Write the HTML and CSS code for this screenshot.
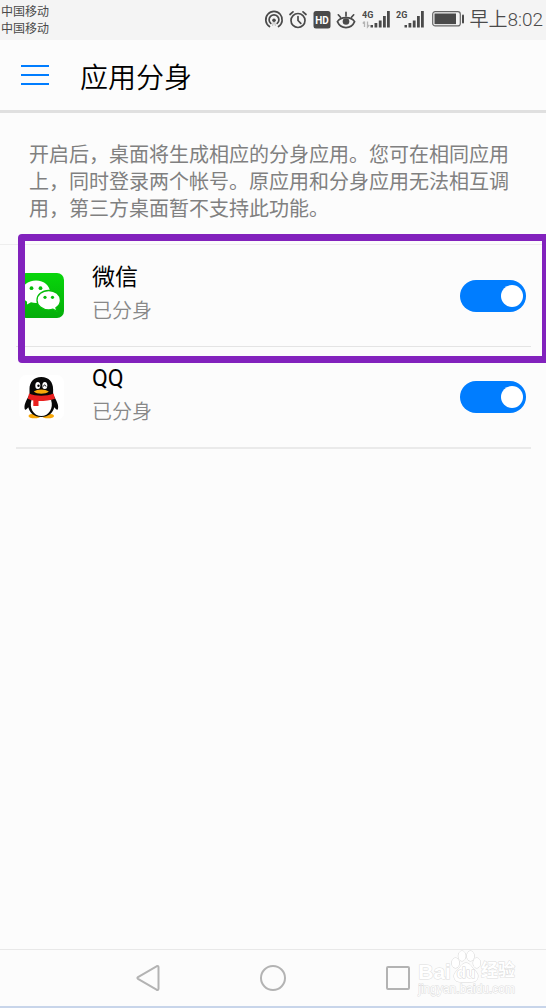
FILE: index.html
```
<!DOCTYPE html>
<html lang="zh-CN">
<head>
<meta charset="utf-8">
<meta name="viewport" content="width=device-width, initial-scale=1">
<title>应用分身</title>
<link rel="stylesheet" href="styles.css">
</head>
<body>
<div class="screen">
  <div class="status">
    <div class="carriers"><span>中国移动</span><span>中国移动</span></div>
    <div class="indicators">
      <svg width="20" height="20" viewBox="0 0 20 20" fill="none" stroke="#4a4a4a" stroke-width="1.7" stroke-linecap="round">
        <path d="M5.500 16.500A8.200 8.200 0 1 1 14.500 16.500"/><path d="M6.800 13.400A4.900 4.900 0 1 1 13.200 13.400"/>
        <circle cx="10" cy="10.300" r="1.800" fill="#4a4a4a" stroke="none"/><path d="M9.500 11L8.700 15.500M10.500 11L11.300 15.500" stroke-width="1" opacity=".35"/>
      </svg>
      <svg width="20" height="20" viewBox="0 0 20 20" fill="none" stroke="#4a4a4a" stroke-width="1.7" stroke-linecap="round">
        <circle cx="10" cy="10.500" r="7"/><path d="M10 6.500V10.500l2.800 2.800M2 4.500L5 1.800M18 4.500L15 1.800"/>
      </svg>
      <svg width="20" height="20" viewBox="0 0 20 20">
        <rect x="1.500" y="1" width="17" height="17.500" rx="2.500" fill="#4a4a4a"/>
        <text x="10" y="13.500" text-anchor="middle" class="hd">HD</text>
      </svg>
      <svg width="20" height="20" viewBox="0 0 20 20" fill="none" stroke="#4a4a4a" stroke-width="1.7" stroke-linecap="round">
        <path d="M1.400 11.600C4.800 6.400 15.200 6.400 18.600 11.600C15.200 19.500 4.800 19.500 1.400 11.600Z"/>
        <circle cx="10" cy="11.500" r="3.300" fill="#4a4a4a" stroke="none"/><path d="M10 6V2.400M4.500 7.200L2.300 4.800M15.500 7.200L17.700 4.800"/>
      </svg>
      <svg class="signal" width="28" height="20" viewBox="0 0 28 20">
        <text x="0" y="8" class="net">4G</text>
        <path d="M2.500 17V11.500M.8 13.500L2.500 11.500M5.500 11.500V17L7.300 15" fill="none" stroke="#b4b4b4" stroke-width="1.300"/>
        <path d="M8.500 15h2.500v2.500H8.500zM12.500 13h2.800v4.500H12.500zM16.800 10.500h2.800v7h-2.800zM21 6h2.800v11.500H21zM25 1h2.800v16.500H25z" fill="#4a4a4a"/>
      </svg>
      <svg class="signal" width="28" height="20" viewBox="0 0 28 20">
        <text x="0" y="8" class="net">2G</text>
        <path d="M8.500 15h2.500v2.500H8.500zM12.500 13h2.800v4.500H12.500zM16.800 10.500h2.800v7h-2.800zM21 6h2.800v11.500H21zM25 1h2.800v16.500H25z" fill="#4a4a4a"/>
      </svg>
      <svg class="battery" width="32" height="20" viewBox="0 0 32 20">
        <rect x=".7" y="1.700" width="27.600" height="14.200" rx="2.500" fill="none" stroke="#666" stroke-width="1.200"/>
        <rect x="2.500" y="3.500" width="21.500" height="10.600" fill="#4a4a4a"/><rect x="30" y="4.500" width="2" height="9" rx="1" fill="#4a4a4a"/>
      </svg>
      <time class="clock">早上8:02</time>
    </div>
  </div>

  <header class="header">
    <button class="menu" aria-label="菜单"><span></span><span></span><span></span></button>
    <h1 class="title">应用分身</h1>
  </header>

  <main class="content">
    <p class="intro">开启后，桌面将生成相应的分身应用。您可在相同应用上，同时登录两个帐号。原应用和分身应用无法相互调用，第三方桌面暂不支持此功能。</p>
    <div class="list">
      <div class="highlight"></div>
      <div class="row">
        <svg class="app-icon" width="45" height="45" viewBox="0 0 45 45">
          <defs><linearGradient id="green" x1="0" y1="0" x2="0" y2="1"><stop offset="0" stop-color="#08d60b"/><stop offset="1" stop-color="#04ad0a"/></linearGradient></defs>
          <rect width="45" height="45" rx="7" fill="url(#green)"/>
          <path d="M17 7.500C8.800 7.500 2.500 12.700 2.500 19.500c0 3.800 2.200 7.200 5.600 9.300L8 31.500l4-2.300c1.600.5 3.200.7 5 .7 8.200 0 14-4.500 14-10.700S25.200 7.500 17 7.500z" fill="#fff"/>
          <path d="M29.700 17.500c-6.500 0-11.700 4.300-11.700 9.700s5.200 9.700 11.700 9.700c1.500 0 3-.2 4.300-.7l4 2.200-1.100-3.700c2.700-1.700 4.500-4.500 4.500-7.500 0-5.400-5.200-9.700-11.700-9.700z" fill="#fff" stroke="#06bd0a" stroke-width="1.300"/>
          <g fill="#06bd0a"><circle cx="12.500" cy="15.200" r="1.900"/><circle cx="21.500" cy="15.200" r="1.900"/><circle cx="26" cy="24.300" r="1.600"/><circle cx="33.500" cy="24.300" r="1.600"/></g>
        </svg>
        <label class="label" for="wechat"><span class="name">微信</span><span class="state">已分身</span></label>
        <input class="switch" id="wechat" type="checkbox" role="switch" checked>
      </div>
      <div class="row">
        <svg class="app-icon" width="45" height="45" viewBox="0 0 45 45">
          <rect width="45" height="45" rx="7" fill="#fff"/>
          <ellipse cx="15.500" cy="41" rx="6" ry="2.300" fill="#f7a70a"/><ellipse cx="29" cy="41" rx="6" ry="2.300" fill="#f7a70a"/>
          <path d="M22.300 2C14.500 2 10.500 7.500 10.500 14v5.500C8 24 5 29 5.500 33c.3 2.800 1.700 2 3.800-.8C10.600 37.500 15 42 22.300 42s11.700-4.500 13-9.800c2.100 2.800 3.500 3.600 3.800.8.500-4-2.500-9-5-13.500V14C34.100 7.500 30.100 2 22.300 2z" fill="#080808"/>
          <path d="M12.500 25h19.600c2.600 8-2.100 16-9.800 16s-12.400-8-9.800-16z" fill="#fff"/>
          <path d="M10 18.500c7 3 17.500 3 24.600 0l1.400 5.200c-4.500 1.700-10 2.300-16.500 2.300v5h-5.200v-5.500c-2-.3-4-.9-5.500-1.800z" fill="#e9201f"/>
          <ellipse cx="18.800" cy="10.500" rx="2.500" ry="3.500" fill="#fff"/><ellipse cx="25.800" cy="10.500" rx="2.500" ry="3.500" fill="#fff"/>
          <circle cx="19.500" cy="10.700" r="1.200"/><path d="M24.300 11.500c.5-2 2.200-2 2.700 0" fill="none" stroke="#000"/>
          <path d="M14.800 16.500c3.700-2.800 11.300-2.800 15 0-3 3-12 3-15 0z" fill="#f7a70a"/>
        </svg>
        <label class="label" for="qq"><span class="name">QQ</span><span class="state">已分身</span></label>
        <input class="switch" id="qq" type="checkbox" role="switch" checked>
      </div>
    </div>
  </main>

  <nav class="navbar">
    <button aria-label="返回"><svg width="28" height="28" viewBox="0 0 28 28"><path d="M4 13.200L22.500 2.300Q24.500 1.500 24.500 3.500V24.500Q24.500 26.500 22.500 25.700L4 14.800Q2.800 14 4 13.200Z"/></svg></button>
    <button aria-label="主页"><svg width="28" height="28" viewBox="0 0 28 28"><circle cx="14" cy="14" r="12"/></svg></button>
    <button aria-label="最近任务"><svg width="28" height="28" viewBox="0 0 28 28"><rect x="3" y="3" width="22" height="22" rx="1"/></svg></button>
    <div class="watermark">
      <div class="brand">
        <span class="latin">Bai</span>
        <svg width="30" height="34" viewBox="0 0 30 34">
          <g fill="#fff" stroke="#d4d4d4"><ellipse cx="4.500" cy="13" rx="3.800" ry="5"/><ellipse cx="11" cy="6" rx="3.700" ry="5"/><ellipse cx="19.500" cy="6" rx="3.700" ry="5"/><ellipse cx="25.800" cy="13" rx="3.700" ry="5"/>
          <path d="M15 13c-4 0-5.500 4-8 6.500s-5 5-3.500 9 6 3.500 11.500 3.500 10 .5 11.500-3.500-1-6.500-3.500-9S19 13 15 13z"/></g>
          <text x="15" y="28" text-anchor="middle" class="du">du</text>
        </svg>
        <span class="cjk">经验</span>
      </div>
      <div class="site">jingyan.baidu.com</div>
    </div>
  </nav>
</div>
</body>
</html>
```
FILE: styles.css
```
* { box-sizing: border-box; }
body {
  margin: 0;
  background: #fcfcfc;
  color: #000;
  font-family: Roboto, "Noto Sans CJK SC", sans-serif;
}
button { border: 0; padding: 0; background: none; }
svg { display: block; flex: none; }
.screen {
  display: flex;
  flex-direction: column;
  min-height: 100vh;
  overflow: hidden;
}
.status {
  display: flex;
  justify-content: space-between;
  align-items: center;
  height: 40px;
  padding: 0 3px 0 1px;
  background: #f4f4f4;
  color: #4a4a4a;
}
.carriers {
  display: flex;
  flex-direction: column;
  padding-top: 2px;
  font-size: 12px;
  line-height: 17px;
}
.indicators {
  display: flex;
  align-items: center;
  gap: 4px;
}
.signal { margin-left: 2px; }
.battery { margin-left: 4px; }
.clock {
  margin-left: 1px;
  font-size: 19px;
  font-weight: 350;
  line-height: 24px;
}
.hd { fill: #fff; font-size: 10px; font-weight: 700; }
.net { fill: #4a4a4a; font-size: 9px; font-weight: 700; }
.header {
  display: flex;
  align-items: center;
  gap: 31px;
  height: 73px;
  padding: 0 21px;
  border-bottom: 3px solid #e0e0e0;
}
.menu {
  display: flex;
  flex-direction: column;
  gap: 7px;
  width: 28px;
}
.menu span { height: 2px; background: #007dff; }
.title {
  margin: 0;
  padding-top: 7px;
  font-size: 28px;
  font-weight: 350;
  line-height: 40px;
}
.content { flex: 1; }
.intro {
  margin: 0;
  padding: 29px 28px 21px 29px;
  color: #808080;
  font-size: 20px;
  font-weight: 400;
  line-height: 27px;
}
.list {
  position: relative;
  border-top: 1px solid #eee;
}
.highlight {
  position: absolute;
  top: -11px;
  left: 18px;
  right: 0;
  height: 129px;
  border: 7px solid #8222bd;
  border-right-width: 4px;
  border-radius: 4px 0 0 4px;
  pointer-events: none;
}
.row {
  display: flex;
  align-items: center;
  height: 102px;
  margin: 0 15px 0 16px;
  padding: 0 5px 0 3px;
  border-bottom: 1px solid #e4e4e4;
}
.row:last-child { border-bottom: 2px solid #eaeaea; }
.label {
  display: flex;
  flex: 1;
  flex-direction: column;
  margin-left: 28px;
  padding-bottom: 4px;
}
.name { font-size: 23px; line-height: 34px; }
.state { color: #888; font-size: 20px; font-weight: 350; line-height: 32px; }
.switch {
  display: flex;
  align-items: center;
  justify-content: flex-end;
  appearance: none;
  width: 66px;
  height: 32px;
  margin: 0;
  padding: 0 3px;
  border-radius: 16px;
  background: #bbb;
}
.switch::before {
  content: "";
  width: 22px;
  height: 22px;
  border-radius: 50%;
  background: #fff;
}
.switch:checked { background: #007dff; }
.switch:not(:checked) { justify-content: flex-start; }
.navbar {
  position: relative;
  display: grid;
  grid-template-columns: repeat(3, 125px);
  justify-content: center;
  height: 59px;
  border-top: 1px solid #e8e8e8;
  border-bottom: 2px solid #c8d5ea;
}
.navbar button {
  display: flex;
  align-items: center;
  justify-content: center;
}
.navbar button svg { fill: none; stroke: #b3b3b3; stroke-width: 2; }
.watermark {
  position: absolute;
  right: 31px;
  top: 0;
  color: #fff;
  -webkit-text-stroke: 1px #dcdcdc;
  paint-order: stroke fill;
}
.brand { display: flex; align-items: center; height: 33px; }
.latin { padding-top: 10px; font: 700 21px/24px "Liberation Sans", sans-serif; }
.cjk { padding-top: 6px; font-size: 17px; font-weight: 700; line-height: 24px; }
.du { fill: #fff; stroke: #d4d4d4; stroke-width: 1px; font: 700 15px "Liberation Sans", sans-serif; }
.site { font: 400 12px/12px "Liberation Sans", sans-serif; }
```
